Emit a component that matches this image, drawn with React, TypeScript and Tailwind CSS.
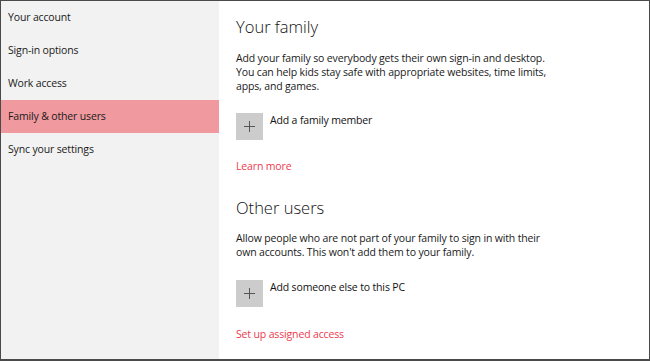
import React from "react";

const nav = ["Your account", "Sign-in options", "Work access", "Family & other users", "Sync your settings"];

function PlusTile({ label }: { label: string }) {
  return (
    <div className="flex items-start gap-[7px]">
      <div className="w-[27px] h-[27px] bg-[#cccccc] flex items-center justify-center">
        <svg width="11" height="11" viewBox="0 0 11 11">
          <path d="M5.5 0v11M0 5.5h11" stroke="#555" strokeWidth="1" />
        </svg>
      </div>
      <span className="text-[10.5px] tracking-[-0.15px] leading-[14px] text-[#111]">{label}</span>
    </div>
  );
}

export default function App() {
  return (
    <div
      className="w-[650px] h-[361px] flex border-[#4a4a4a] border-t border-l border-r border-b-2 overflow-hidden"
      style={{ fontFamily: '"Open Sans", "Noto Sans", sans-serif' }}
    >
      <aside className="w-[218px] shrink-0 bg-[#f2f2f2] flex flex-col">
        {nav.map((item) => (
          <div
            key={item}
            className={`h-[33px] flex items-center pl-[7px] text-[10.5px] tracking-[-0.15px] text-[#1a1a1a] ${
              item === "Family & other users" ? "bg-[#f0999f]" : ""
            }`}
          >
            {item}
          </div>
        ))}
      </aside>
      <main className="flex-1 bg-white pl-[17px] pt-[14px]">
        <h1 className="text-[16.5px] font-light leading-[24px] text-[#111]">Your family</h1>
        <p className="mt-[12px] text-[10.5px] tracking-[-0.15px] leading-[14px] text-[#1a1a1a] w-[318px]">
          Add your family so everybody gets their own sign-in and desktop. You can help kids stay safe with appropriate websites, time limits, apps, and games.
        </p>
        <div className="mt-[20px]">
          <PlusTile label="Add a family member" />
        </div>
        <a className="block mt-[19px] text-[10.5px] tracking-[-0.15px] leading-[14px] text-[#ee3a4e]">Learn more</a>

        <h2 className="mt-[23px] text-[16.5px] font-light leading-[24px] text-[#111]">Other users</h2>
        <p className="mt-[11px] text-[10.5px] tracking-[-0.15px] leading-[14px] text-[#1a1a1a] w-[318px]">
          Allow people who are not part of your family to sign in with their own accounts. This won't add them to your family.
        </p>
        <div className="mt-[21px]">
          <PlusTile label="Add someone else to this PC" />
        </div>
        <a className="block mt-[20px] text-[10.5px] tracking-[-0.15px] leading-[14px] text-[#ee3a4e]">Set up assigned access</a>
      </main>
    </div>
  );
}
